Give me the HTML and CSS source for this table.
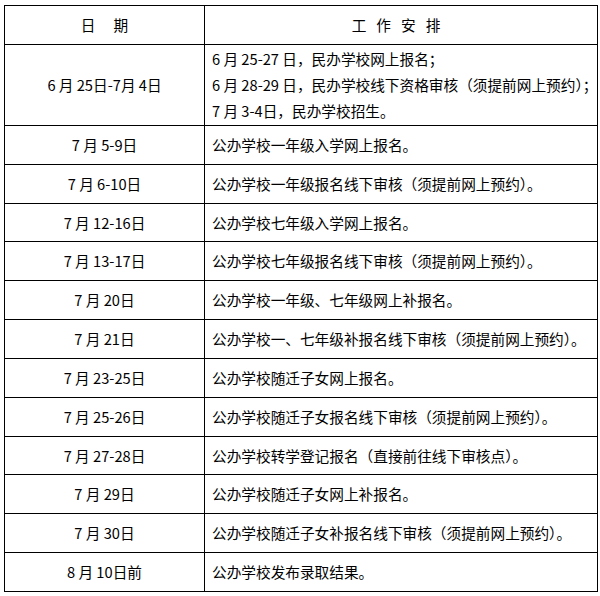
FILE: index.html
```html
<!DOCTYPE html>
<html lang="zh-CN">
<head>
<meta charset="utf-8">
<link rel="stylesheet" href="styles.css">
</head>
<body>
<div class="wrap">
<table class="sched">
  <colgroup><col class="c1"><col class="c2"></colgroup>
  <thead>
    <tr class="head">
      <th class="h1">日期</th>
      <th class="h2">工作安排</th>
    </tr>
  </thead>
  <tbody>
    <tr class="multi">
      <td class="date">6 月 25日-7月 4日</td>
      <td class="work">
        <div class="line">6 月 25-27 日，民办学校网上报名；</div>
        <div class="line">6 月 28-29 日，民办学校线下资格审核（须提前网上预约）；</div>
        <div class="line">7 月 3-4日，民办学校招生。</div>
      </td>
    </tr>
    <tr><td class="date">7 月 5-9日</td><td class="work">公办学校一年级入学网上报名。</td></tr>
    <tr><td class="date">7 月 6-10日</td><td class="work">公办学校一年级报名线下审核（须提前网上预约）。</td></tr>
    <tr><td class="date">7 月 12-16日</td><td class="work">公办学校七年级入学网上报名。</td></tr>
    <tr><td class="date">7 月 13-17日</td><td class="work">公办学校七年级报名线下审核（须提前网上预约）。</td></tr>
    <tr><td class="date">7 月 20日</td><td class="work">公办学校一年级、七年级网上补报名。</td></tr>
    <tr><td class="date">7 月 21日</td><td class="work">公办学校一、七年级补报名线下审核（须提前网上预约）。</td></tr>
    <tr><td class="date">7 月 23-25日</td><td class="work">公办学校随迁子女网上报名。</td></tr>
    <tr><td class="date">7 月 25-26日</td><td class="work">公办学校随迁子女报名线下审核（须提前网上预约）。</td></tr>
    <tr><td class="date">7 月 27-28日</td><td class="work">公办学校转学登记报名（直接前往线下审核点）。</td></tr>
    <tr><td class="date">7 月 29日</td><td class="work">公办学校随迁子女网上补报名。</td></tr>
    <tr><td class="date">7 月 30日</td><td class="work">公办学校随迁子女补报名线下审核（须提前网上预约）。</td></tr>
    <tr><td class="date">8 月 10日前</td><td class="work">公办学校发布录取结果。</td></tr>
  </tbody>
</table>
</div>
</body>
</html>
```
FILE: styles.css
```css
html, body {
  margin: 0;
  padding: 0;
  background: #ffffff;
}
body {
  font-family: "Noto Sans CJK SC", "Liberation Sans", sans-serif;
  font-size: 14.67px;
  color: #000000;
}
.wrap {
  padding: 5px 0 0 4px;
}
.sched {
  border-collapse: collapse;
  width: 593px;
  table-layout: fixed;
}
.c1 { width: 200px; }
.c2 { width: 393px; }
.sched th, .sched td {
  border: 1px solid #000000;
  padding: 0;
  vertical-align: middle;
  line-height: 20px;
}
.sched .head { height: 39px; }
.sched th {
  font-weight: normal;
  text-align: center;
}
.sched .h1 {
  letter-spacing: 18px;
  text-indent: 18px;
}
.sched .h2 {
  letter-spacing: 10px;
  text-indent: 0;
}
.sched tbody tr { height: 38.83px; }
.sched tbody tr.multi { height: 81px; }
.sched .date {
  text-align: center;
}
.sched .work {
  text-align: left;
  padding-left: 7px;
  white-space: nowrap;
}
.sched .line {
  line-height: 26px;
}
```
